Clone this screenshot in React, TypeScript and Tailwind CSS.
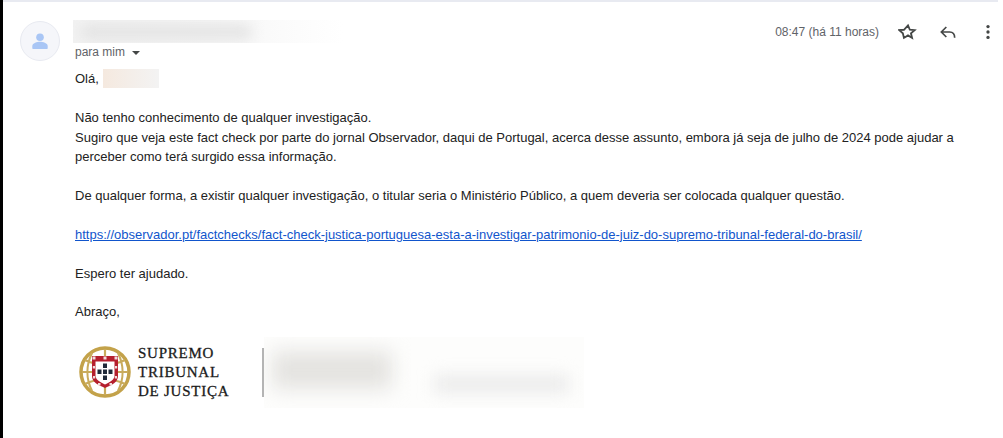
export default function App() {
  return (
    <div className="flex h-[438px] w-[1003px] overflow-hidden bg-white font-['Liberation_Sans',Arial,sans-serif] text-[#222222]">
      <div className="w-[3px] shrink-0 bg-black" />
      <div className="flex h-full w-[995px] flex-col border-t-2 border-[#e8eaf1]">
        <div className="flex pl-[17px] pt-[18px]">
          <div className="mt-[1px] flex h-10 w-10 shrink-0 items-center justify-center rounded-full border border-[#e8eaf1] bg-[#f5f6fa]">
            <svg width="20" height="20" viewBox="0 0 20 20" fill="#a9c6f5">
              <circle cx="10" cy="6.2" r="3.8" />
              <path d="M2.3 17v-2c0-2.8 5-4.2 7.7-4.2s7.700 1.400 7.700 4.200v2c0 .6-.4 1-1 1H3.300c-.6 0-1-.4-1-1z" />
            </svg>
          </div>
          <div className="ml-[13px] w-[270px] shrink-0">
            <div className="h-[23px] overflow-hidden bg-gradient-to-r from-[#f3f3f3] via-[#f6f6f6] to-white">
              <div className="ml-[8px] mt-[5px] h-[14px] w-[170px] bg-[#e2e2e2] blur-[7px]" />
            </div>
            <div className="ml-[2px] mt-[1px] flex items-center text-[12px] leading-[16px] text-[#5f6368]">
              para mim
              <span className="ml-[7px] mt-[1px] h-0 w-0 border-x-[4px] border-t-[4px] border-x-transparent border-t-[#444746]" />
            </div>
          </div>
          <div className="ml-auto flex h-[24px] items-center">
            <span className="text-[12px] text-[#5f6368]">08:47 (há 11 horas)</span>
            <svg className="ml-[19px]" width="20" height="20" viewBox="0 0 24 24" fill="none" stroke="#444746" strokeWidth="2.200" strokeLinejoin="miter">
              <path d="M12 4.500l2.200 5.300 5.700.45-4.350 3.750 1.320 5.600L12 16.600l-4.870 3-1.320-5.600-4.350-3.750 5.700-.45z" transform="translate(0 -.5)" />
            </svg>
            <svg className="ml-[20px]" width="20" height="20" viewBox="0 0 24 24" fill="none" stroke="#444746" strokeWidth="2">
              <path d="M10 6l-6 6 6 6M4.500 12H14c3.500 0 6 2.500 6 7" />
            </svg>
            <svg className="ml-[20px]" width="20" height="20" viewBox="0 0 24 24" fill="#444746">
              <circle cx="12" cy="5.500" r="2" />
              <circle cx="12" cy="12" r="2" />
              <circle cx="12" cy="18.500" r="2" />
            </svg>
          </div>
        </div>

        <div className="ml-[72px] mt-[8px] w-[890px] text-[13px] leading-[19.400px]">
          <div className="flex items-center">
            Olá,
            <span className="ml-[4px] h-[19px] w-[56px] bg-gradient-to-r from-[#f5e9df] to-[#f3f3f3]" />
          </div>
          <p className="mt-[20px]">Não tenho conhecimento de qualquer investigação.</p>
          <p>Sugiro que veja este fact check por parte do jornal Observador, daqui de Portugal, acerca desse assunto, embora já seja de julho de 2024 pode ajudar a perceber como terá surgido essa informação.</p>
          <p className="mt-[19.400px]">De qualquer forma, a existir qualquer investigação, o titular seria o Ministério Público, a quem deveria ser colocada qualquer questão.</p>
          <p className="mt-[19.400px]">
            <a className="text-[#1155cc] underline" href="#">https://observador.pt/factchecks/fact-check-justica-portuguesa-esta-a-investigar-patrimonio-de-juiz-do-supremo-tribunal-federal-do-brasil/</a>
          </p>
          <p className="mt-[19.400px]">Espero ter ajudado.</p>
          <p className="mt-[19.400px]">Abraço,</p>
        </div>

        <div className="ml-[76px] mt-[15px] flex items-center">
          <svg width="52" height="52" viewBox="0 0 52 52" className="shrink-0">
            <circle cx="26" cy="26" r="24" fill="none" stroke="#c3a24a" strokeWidth="3.500" />
            <path d="M3 26h46M26 3v46M6 14c12 6 28 6 40 0M6 38c12-6 28-6 40 0M13 7c-6 12-6 26 0 38M39 7c6 12 6 26 0 38" fill="none" stroke="#c9ab5c" strokeWidth="2.200" />
            <path d="M13 10h26v20c0 6-6 9-13 12-7-3-13-6-13-12z" fill="#b51f2e" />
            <path d="M16.500 15.500h19v14c0 4-4 6.500-9.500 9-5.500-2.500-9.500-5-9.500-9z" fill="#fff" />
            <g fill="#1f2a3a">
              <rect x="24" y="17.500" width="4" height="4.500" />
              <rect x="24" y="23.500" width="4" height="4.500" />
              <rect x="24" y="29.500" width="4" height="4.500" />
              <rect x="18.500" y="23.500" width="4" height="4.500" />
              <rect x="29.500" y="23.500" width="4" height="4.500" />
            </g>
            <g fill="#f0dcdc">
              <rect x="13.500" y="10.500" width="3" height="3" />
              <rect x="24.500" y="10.500" width="3" height="3" />
              <rect x="35.500" y="10.500" width="3" height="3" />
              <rect x="13.800" y="20" width="2.200" height="2.500" />
              <rect x="36" y="20" width="2.200" height="2.500" />
              <rect x="14" y="30" width="2.200" height="2.500" />
              <rect x="35.800" y="30" width="2.200" height="2.500" />
              <rect x="19" y="37" width="2.500" height="2.500" />
              <rect x="30.500" y="37" width="2.500" height="2.500" />
            </g>
          </svg>
          <div className="ml-[7px] w-[122px] shrink-0 font-['Liberation_Serif',serif] text-[15px] leading-[19px] tracking-[0.75px] text-[#1b1b1b] [-webkit-text-stroke:0.3px_#1b1b1b]">
            <div>SUPREMO</div>
            <div>TRIBUNAL</div>
            <div>DE JUSTIÇA</div>
          </div>
          <div className="ml-[2px] h-[49px] w-[2px] bg-[#b4b4b4]" />
          <div className="h-[71px] w-[320px] overflow-hidden bg-[#fdfdfc]">
            <div className="ml-[8px] mt-[14px] h-[38px] w-[120px] bg-[#e4e3e0] blur-[10px]" />
            <div className="ml-[170px] -mt-[14px] h-[18px] w-[135px] bg-[#ebebeb] blur-[8px]" />
          </div>
        </div>
      </div>
      <div className="w-[5px] shrink-0 bg-white" />
    </div>
  );
}
